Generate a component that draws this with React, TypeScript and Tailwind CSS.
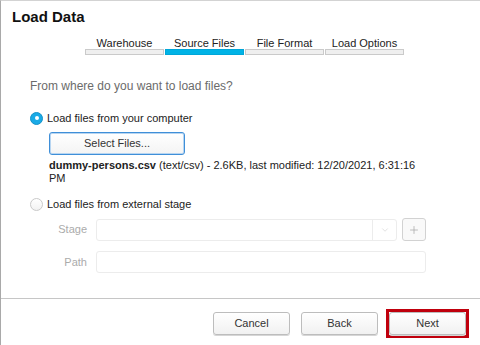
import React from 'react';
import { ChevronDown, Plus } from 'lucide-react';

const steps = ['Warehouse', 'Source Files', 'File Format', 'Load Options'];

const Radio: React.FC<{ checked?: boolean; label: string }> = ({ checked, label }) => (
  <label className="flex items-center gap-[4px] h-[14px] text-[11px] leading-[14px] text-[#222]">
    {checked ? (
      <span className="w-[13px] h-[13px] rounded-full bg-[#19aae6] border border-[#1592c9] flex items-center justify-center">
        <span className="w-[4px] h-[4px] rounded-full bg-white" />
      </span>
    ) : (
      <span className="w-[13px] h-[13px] rounded-full bg-gradient-to-b from-white to-[#f2f2f2] border border-[#c9c9c9]" />
    )}
    <span>{label}</span>
  </label>
);

const FooterButton: React.FC<{ children: React.ReactNode }> = ({ children }) => (
  <button
    type="button"
    className="w-[77px] h-[23px] rounded-[3px] border border-[#bdbdbd] bg-gradient-to-b from-white to-[#f1f1f1] shadow-[0_1px_0_#d6d6d6] text-[11px] text-[#333]"
  >
    {children}
  </button>
);

export default function App() {
  return (
    <div
      className="w-[480px] h-[345px] bg-white border-l border-t border-l-[#a9a9a9] border-t-[#d3d3d3] flex flex-col overflow-hidden"
      style={{ fontFamily: '"Liberation Sans", Arial, sans-serif' }}
    >
      <div className="flex-1 flex flex-col">
        {/* Title */}
        <h1 className="pl-[11px] pt-[7px] text-[15px] leading-[18px] font-bold text-[#111]">Load Data</h1>

        {/* Step indicator */}
        <div className="flex gap-[1px] ml-[84px] mt-[11px]">
          {steps.map((s, i) => (
            <div key={s} className="w-[79px] flex flex-col">
              <span className="text-[11px] leading-[12px] text-center text-[#222]">{s}</span>
              <span
                className={
                  'h-[6px] border ' +
                  (i === 1 ? 'bg-[#00b3e6] border-[#00a6d8]' : 'bg-[#efefef] border-[#cacaca]')
                }
              />
            </div>
          ))}
        </div>

        {/* Body */}
        <div className="pl-[29px] pr-[54px] flex flex-col">
          <p className="mt-[24px] text-[12px] leading-[14px] text-[#6b6b6b]">From where do you want to load files?</p>

          <div className="mt-[18px]">
            <Radio checked label="Load files from your computer" />
          </div>

          <button
            type="button"
            className="mt-[7px] ml-[19px] w-[136px] h-[23px] rounded-[3px] border border-[#3f8fd8] bg-gradient-to-b from-white to-[#f4f4f4] shadow-[inset_0_0_0_1px_#b7d5f1] text-[11px] text-[#333]"
          >
            Select Files...
          </button>

          <p className="mt-[4px] ml-[19px] text-[11px] leading-[13px] text-[#222]">
            <b>dummy-persons.csv</b> (text/csv) - 2.6KB, last modified: 12/20/2021, 6:31:16 PM
          </p>

          <div className="mt-[12px]">
            <Radio label="Load files from external stage" />
          </div>

          <div className="mt-[7px] ml-[20px] grid grid-cols-[37px_1fr] gap-x-[9px] gap-y-[10px] items-center">
            <span className="text-[11px] text-right text-[#ababab]">Stage</span>
            <div className="flex items-center gap-[5px]">
              <div className="flex-1 h-[22px] rounded-[3px] border border-[#ececec] flex justify-end">
                <span className="w-[24px] border-l border-[#ececec] flex items-center justify-center">
                  <ChevronDown size={10} strokeWidth={1.5} className="text-[#cfcfcf]" />
                </span>
              </div>
              <span className="w-[24px] h-[23px] rounded-[3px] border border-[#d2d2d2] bg-[#f9f9f9] flex items-center justify-center">
                <Plus size={12} strokeWidth={1.5} className="text-[#a8a8a8]" />
              </span>
            </div>
            <span className="text-[11px] text-right text-[#ababab]">Path</span>
            <div className="h-[22px] rounded-[3px] border border-[#ececec]" />
          </div>
        </div>
      </div>

      {/* Footer */}
      <div className="h-[47px] border-t border-[#c6c6c6] flex justify-end items-start gap-[11px] pt-[13px] pr-[14px]">
        <FooterButton>Cancel</FooterButton>
        <FooterButton>Back</FooterButton>
        {/* highlight box around Next */}
        <div className="-m-[3px] border-[3px] border-[#c0000d] flex">
          <FooterButton>Next</FooterButton>
        </div>
      </div>
    </div>
  );
}
